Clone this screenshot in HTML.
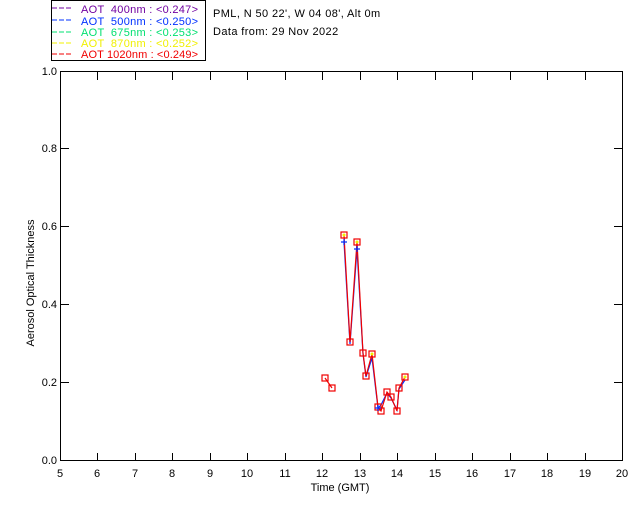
<!DOCTYPE html>
<html><head><style>
html,body{margin:0;padding:0;background:#fff;width:640px;height:512px;overflow:hidden}
svg text{font-family:"Liberation Sans",sans-serif;font-size:11px}
</style></head><body>
<svg width="640" height="512" xmlns="http://www.w3.org/2000/svg" shape-rendering="crispEdges">
<rect x="0" y="0" width="640" height="512" fill="#fff"/>
<rect x="51.5" y="0.5" width="154" height="60" fill="none" stroke="#000"/>
<g>
<line x1="52" y1="8" x2="73" y2="8" stroke="#7000a0" stroke-dasharray="5,2"/><text x="81" y="13" fill="#7000a0" textLength="117" lengthAdjust="spacing" xml:space="preserve">AOT  400nm : &lt;0.247&gt;</text>
<line x1="52" y1="20" x2="73" y2="20" stroke="#0030ff" stroke-dasharray="5,2"/><text x="81" y="25" fill="#0030ff" textLength="117" lengthAdjust="spacing" xml:space="preserve">AOT  500nm : &lt;0.250&gt;</text>
<line x1="52" y1="32" x2="73" y2="32" stroke="#00e070" stroke-dasharray="5,2"/><text x="81" y="36" fill="#00e070" textLength="117" lengthAdjust="spacing" xml:space="preserve">AOT  675nm : &lt;0.253&gt;</text>
<line x1="52" y1="43" x2="73" y2="43" stroke="#f0f000" stroke-dasharray="5,2"/><text x="81" y="47" fill="#f0f000" textLength="117" lengthAdjust="spacing" xml:space="preserve">AOT  870nm : &lt;0.252&gt;</text>
<line x1="52" y1="54" x2="73" y2="54" stroke="#f00000" stroke-dasharray="5,2"/><text x="81" y="58" fill="#f00000" textLength="117" lengthAdjust="spacing" xml:space="preserve">AOT 1020nm : &lt;0.249&gt;</text>
</g>
<text x="213" y="17" letter-spacing="0.4">PML, N 50 22', W 04 08', Alt 0m</text>
<text x="213" y="35" letter-spacing="0.4">Data from: 29 Nov 2022</text>
<rect x="60.5" y="71.5" width="562" height="389" fill="none" stroke="#000"/>
<g stroke="#000">
<path d="M97.5 461v-8M135.5 461v-8M172.5 461v-8M210.5 461v-8M247.5 461v-8M285.5 461v-8M322.5 461v-8M360.5 461v-8M397.5 461v-8M435.5 461v-8M472.5 461v-8M510.5 461v-8M547.5 461v-8M585.5 461v-8"/>
<path d="M97.5 72v8M135.5 72v8M172.5 72v8M210.5 72v8M247.5 72v8M285.5 72v8M322.5 72v8M360.5 72v8M397.5 72v8M435.5 72v8M472.5 72v8M510.5 72v8M547.5 72v8M585.5 72v8"/>
<path d="M61 382.5h8M61 304.5h8M61 226.5h8M61 148.5h8M622 382.5h-8M622 304.5h-8M622 226.5h-8M622 148.5h-8"/>
</g>
<g text-anchor="middle">
<text x="60" y="477">5</text><text x="97" y="477">6</text><text x="135" y="477">7</text><text x="172" y="477">8</text><text x="210" y="477">9</text><text x="247" y="477">10</text><text x="285" y="477">11</text><text x="322" y="477">12</text><text x="360" y="477">13</text><text x="397" y="477">14</text><text x="435" y="477">15</text><text x="472" y="477">16</text><text x="510" y="477">17</text><text x="547" y="477">18</text><text x="585" y="477">19</text><text x="622" y="477">20</text>
<text x="340" y="491">Time (GMT)</text>
</g>
<g text-anchor="end">
<text x="57" y="464">0.0</text><text x="57" y="386">0.2</text><text x="57" y="308">0.4</text><text x="57" y="230">0.6</text><text x="57" y="152">0.8</text><text x="57" y="75">1.0</text>
</g>
<text transform="translate(34,283) rotate(-90)" text-anchor="middle" font-size="10">Aerosol Optical Thickness</text>
<g shape-rendering="auto" fill="none">
<polyline stroke="#0030ff" stroke-width="1.2" points="344,242 350,344 357,249 363,354 366,377 372,358 378,408 381,405 387,393 391,398 397,410 399,389 405,380"/>
<polyline stroke="#f00000" stroke-width="1.2" points="344,235 350,342 357,242 363,353 366,376 372,354 378,407 381,411 387,392 391,397 397,411 399,388 405,377"/>
<polyline stroke="#f00000" stroke-width="1.2" points="325,378 332,388"/>
<g stroke="#f00000" stroke-width="1.2">
<rect x="341" y="232" width="6" height="6"/><rect x="354" y="239" width="6" height="6"/><rect x="347" y="339" width="6" height="6"/><rect x="360" y="350" width="6" height="6"/><rect x="363" y="373" width="6" height="6"/><rect x="369" y="351" width="6" height="6"/><rect x="375" y="404" width="6" height="6"/><rect x="378" y="408" width="6" height="6"/><rect x="384" y="389" width="6" height="6"/><rect x="388" y="394" width="6" height="6"/><rect x="394" y="408" width="6" height="6"/><rect x="396" y="385" width="6" height="6"/><rect x="402" y="374" width="6" height="6"/><rect x="322" y="375" width="6" height="6"/><rect x="329" y="385" width="6" height="6"/>
</g>
<g fill="#f0f000"><circle cx="344" cy="235" r="1.5"/><circle cx="357" cy="242" r="1.5"/><circle cx="372" cy="354" r="1.5"/><circle cx="405" cy="377" r="1.5"/></g>
<g stroke="#0030ff" stroke-width="1.2"><path d="M341 242h6M344 239v6M354 249h6M357 246v6M375 408h6M378 405v6"/></g>
</g>
</svg>
</body></html>
